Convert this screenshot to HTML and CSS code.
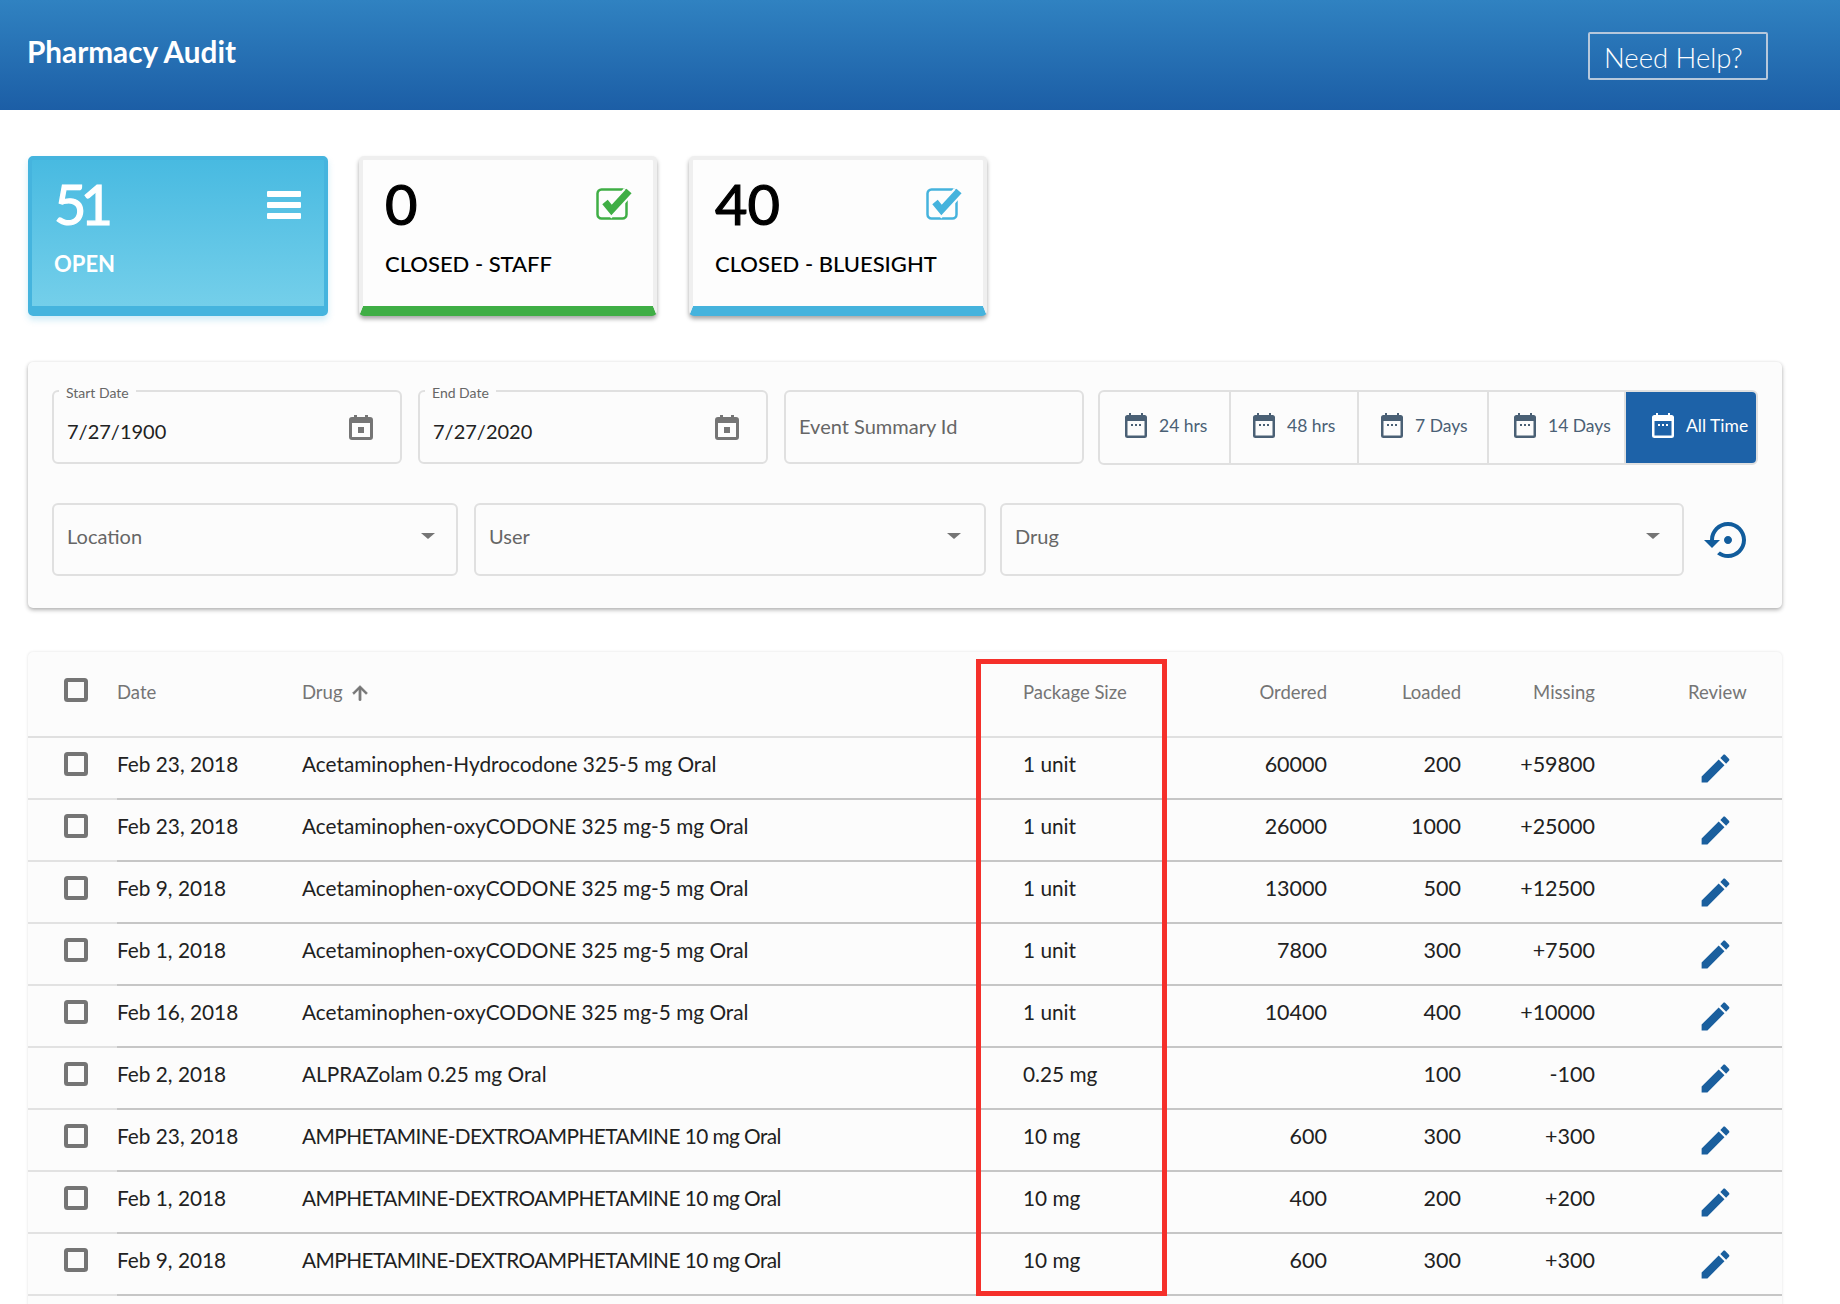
FILE: index.html
```html
<!DOCTYPE html>
<html lang="en">
<head>
<meta charset="utf-8">
<title>Pharmacy Audit</title>
<link rel="stylesheet" href="styles.css">
</head>
<body>
<svg class="defs" width="0" height="0" aria-hidden="true">
  <symbol id="cb" viewBox="0 0 24 24"><rect x="2" y="2" width="20" height="20" rx="1.5" fill="none" stroke="currentColor" stroke-width="4"/></symbol>
  <symbol id="pencil" viewBox="0 0 24 24"><path fill="currentColor" d="M3 17.25V21h3.75L17.81 9.94l-3.75-3.75L3 17.25zM20.71 7.04c.39-.39.39-1.02 0-1.41l-2.34-2.34c-.39-.39-1.02-.39-1.41 0l-1.83 1.83 3.75 3.75 1.83-1.83z"/></symbol>
  <symbol id="cal" viewBox="0 0 24 25"><path fill="currentColor" d="M5 0h3v2h8V0h3v2h2a3 3 0 0 1 3 3v17a3 3 0 0 1-3 3H3a3 3 0 0 1-3-3V5a3 3 0 0 1 3-3h2zM3 8v14h18V8zM9 12h6v6H9z"/></symbol>
  <symbol id="calq" viewBox="0 0 22 25"><path fill="currentColor" d="M4 0h2v2h10V0h2v2h1.500A2.500 2.500 0 0 1 22 4.500v18a2.500 2.500 0 0 1-2.500 2.500h-17A2.500 2.500 0 0 1 0 22.500v-18A2.500 2.500 0 0 1 2.500 2H4zM2.500 8v14.500h17V8zM6 11h2v2H6zM10 11h2v2h-2zM14 11h2v2h-2z"/></symbol>
  <symbol id="reset" viewBox="0 0 24 24"><path fill="currentColor" d="M14 12c0-1.100-.9-2-2-2s-2 .9-2 2 .9 2 2 2 2-.9 2-2zm-2-9c-4.970 0-9 4.030-9 9H0l4 4 4-4H5c0-3.870 3.130-7 7-7s7 3.130 7 7-3.130 7-7 7c-1.510 0-2.910-.49-4.060-1.300l-1.420 1.440C8.040 20.300 9.940 21 12 21c4.970 0 9-4.030 9-9s-4.030-9-9-9z"/></symbol>
  <symbol id="check" viewBox="0 0 38 32"><rect x="1.500" y="1.500" width="29" height="29" rx="4" fill="none" stroke="currentColor" stroke-width="2.500"/><path d="M9 14l6.500 8L32 4" fill="none" stroke="#fdfdfd" stroke-width="11"/><path d="M9 14l6.500 8L33 3" fill="none" stroke="currentColor" stroke-width="7"/></symbol>
</svg>

<header class="topbar">
  <h1 class="brand">Pharmacy Audit</h1>
  <button class="help">Need Help?</button>
</header>

<main class="page">
  <section class="cards">
    <div class="card card-open">
      <div class="card-top"><span class="count">51</span><span class="burger"><i></i><i></i><i></i></span></div>
      <div class="card-label">OPEN</div>
    </div>
    <div class="card card-staff">
      <div class="card-top"><span class="count">0</span><svg class="card-icon"><use href="#check"/></svg></div>
      <div class="card-label">CLOSED - STAFF</div>
    </div>
    <div class="card card-blue">
      <div class="card-top"><span class="count">40</span><svg class="card-icon"><use href="#check"/></svg></div>
      <div class="card-label">CLOSED - BLUESIGHT</div>
    </div>
  </section>

  <section class="filters">
    <div class="filter-row row-one">
      <div class="field w-start"><span class="legend">Start Date</span><span class="value">7/27/1900</span><svg class="ico-cal"><use href="#cal"/></svg></div>
      <div class="field w-end"><span class="legend">End Date</span><span class="value">7/27/2020</span><svg class="ico-cal"><use href="#cal"/></svg></div>
      <div class="field w-id"><span class="placeholder">Event Summary Id</span></div>
      <div class="ranges">
        <div class="range r1"><svg class="ico-q"><use href="#calq"/></svg>24 hrs</div>
        <div class="range r2"><svg class="ico-q"><use href="#calq"/></svg>48 hrs</div>
        <div class="range r3"><svg class="ico-q"><use href="#calq"/></svg>7 Days</div>
        <div class="range r4"><svg class="ico-q"><use href="#calq"/></svg>14 Days</div>
        <div class="range r5 active"><svg class="ico-q"><use href="#calq"/></svg>All Time</div>
      </div>
    </div>
    <div class="filter-row row-two">
      <div class="field select w-loc"><span class="placeholder">Location</span><i class="caret"></i></div>
      <div class="field select w-user"><span class="placeholder">User</span><i class="caret"></i></div>
      <div class="field select w-drug"><span class="placeholder">Drug</span><i class="caret"></i></div>
      <svg class="ico-reset"><use href="#reset"/></svg>
    </div>
  </section>

  <section class="table">
    <div class="tr th">
      <div class="td c-check"><svg class="ico-cb"><use href="#cb"/></svg></div>
      <div class="td">Date</div>
      <div class="td">Drug<svg class="ico-sort" viewBox="0 0 24 24"><path fill="currentColor" stroke="currentColor" stroke-width="1" d="M4 12l1.410 1.410L11 7.830V20h2V7.830l5.580 5.590L20 12l-8-8-8 8z"/></svg></div>
      <div class="td">Package Size</div>
      <div class="td num">Ordered</div>
      <div class="td num">Loaded</div>
      <div class="td num">Missing</div>
      <div class="td c-review">Review</div>
    </div>
    <div class="tr"><div class="td c-check"><svg class="ico-cb"><use href="#cb"/></svg></div><div class="td">Feb 23, 2018</div><div class="td">Acetaminophen-Hydrocodone 325-5 mg Oral</div><div class="td">1 unit</div><div class="td num">60000</div><div class="td num">200</div><div class="td num">+59800</div><div class="td c-review"><svg class="ico-edit"><use href="#pencil"/></svg></div></div>
    <div class="tr"><div class="td c-check"><svg class="ico-cb"><use href="#cb"/></svg></div><div class="td">Feb 23, 2018</div><div class="td">Acetaminophen-oxyCODONE 325 mg-5 mg Oral</div><div class="td">1 unit</div><div class="td num">26000</div><div class="td num">1000</div><div class="td num">+25000</div><div class="td c-review"><svg class="ico-edit"><use href="#pencil"/></svg></div></div>
    <div class="tr"><div class="td c-check"><svg class="ico-cb"><use href="#cb"/></svg></div><div class="td">Feb 9, 2018</div><div class="td">Acetaminophen-oxyCODONE 325 mg-5 mg Oral</div><div class="td">1 unit</div><div class="td num">13000</div><div class="td num">500</div><div class="td num">+12500</div><div class="td c-review"><svg class="ico-edit"><use href="#pencil"/></svg></div></div>
    <div class="tr"><div class="td c-check"><svg class="ico-cb"><use href="#cb"/></svg></div><div class="td">Feb 1, 2018</div><div class="td">Acetaminophen-oxyCODONE 325 mg-5 mg Oral</div><div class="td">1 unit</div><div class="td num">7800</div><div class="td num">300</div><div class="td num">+7500</div><div class="td c-review"><svg class="ico-edit"><use href="#pencil"/></svg></div></div>
    <div class="tr"><div class="td c-check"><svg class="ico-cb"><use href="#cb"/></svg></div><div class="td">Feb 16, 2018</div><div class="td">Acetaminophen-oxyCODONE 325 mg-5 mg Oral</div><div class="td">1 unit</div><div class="td num">10400</div><div class="td num">400</div><div class="td num">+10000</div><div class="td c-review"><svg class="ico-edit"><use href="#pencil"/></svg></div></div>
    <div class="tr"><div class="td c-check"><svg class="ico-cb"><use href="#cb"/></svg></div><div class="td">Feb 2, 2018</div><div class="td">ALPRAZolam 0.25 mg Oral</div><div class="td">0.25 mg</div><div class="td num"></div><div class="td num">100</div><div class="td num">-100</div><div class="td c-review"><svg class="ico-edit"><use href="#pencil"/></svg></div></div>
    <div class="tr"><div class="td c-check"><svg class="ico-cb"><use href="#cb"/></svg></div><div class="td">Feb 23, 2018</div><div class="td caps">AMPHETAMINE-DEXTROAMPHETAMINE 10 mg Oral</div><div class="td">10 mg</div><div class="td num">600</div><div class="td num">300</div><div class="td num">+300</div><div class="td c-review"><svg class="ico-edit"><use href="#pencil"/></svg></div></div>
    <div class="tr"><div class="td c-check"><svg class="ico-cb"><use href="#cb"/></svg></div><div class="td">Feb 1, 2018</div><div class="td caps">AMPHETAMINE-DEXTROAMPHETAMINE 10 mg Oral</div><div class="td">10 mg</div><div class="td num">400</div><div class="td num">200</div><div class="td num">+200</div><div class="td c-review"><svg class="ico-edit"><use href="#pencil"/></svg></div></div>
    <div class="tr"><div class="td c-check"><svg class="ico-cb"><use href="#cb"/></svg></div><div class="td">Feb 9, 2018</div><div class="td caps">AMPHETAMINE-DEXTROAMPHETAMINE 10 mg Oral</div><div class="td">10 mg</div><div class="td num">600</div><div class="td num">300</div><div class="td num">+300</div><div class="td c-review"><svg class="ico-edit"><use href="#pencil"/></svg></div></div>
    <div class="highlight"></div>
  </section>
</main>
</body>
</html>
```
FILE: styles.css
```css
* { box-sizing: border-box; }
html, body { height: 100%; overflow: hidden; }
body { margin: 0; background: #fff; font-family: "Lato", "Liberation Sans", sans-serif; color: #212121; }
.defs { position: absolute; }

.topbar { height: 110px; background: linear-gradient(#3082c1, #1c5ea6); display: flex; justify-content: space-between; padding: 32px 72px 0 27px; }
.brand { margin: 0; font-size: 29.700px; font-weight: 700; color: #fff; line-height: 40px; }
.help { width: 180px; height: 48px; background: transparent; border: 2px solid #b6c8dc; border-radius: 2px; color: #fff; font: 300 27.500px "Lato", sans-serif; text-align: left; padding: 2px 0 0 14px; }

.page { padding: 46px 58px 0 28px; }

.cards { display: flex; gap: 31px; }
.card { width: 298px; height: 160px; border: 4px solid #efefef; border-bottom-width: 10px; border-radius: 5px; background: #fdfdfd; padding: 13px 22px 0 22px; box-shadow: 0 3px 4px rgba(0,0,0,.35); }
.card-open { width: 300px; border-color: #45b4de; background: linear-gradient(#48bae1, #74cfea); color: #fff; box-shadow: 0 4px 6px rgba(69,180,222,.25); }
.card-staff { border-bottom-color: #3fae45; color: #000; }
.card-blue { border-bottom-color: #45b3dd; color: #000; margin-left: 1px; }
.card-top { display: flex; justify-content: space-between; align-items: center; height: 62px; }
.count { font-size: 56px; line-height: 62px; font-weight: 400; -webkit-text-stroke: 1.2px currentColor; }
.card-open .count { letter-spacing: -6px; }
.card-label { margin-top: 14px; font-size: 22px; line-height: 30px; font-weight: 500; }
.card-open .card-label { font-weight: 700; }
.burger { display: flex; flex-direction: column; gap: 5px; margin: 2px 1px 0 0; }
.burger i { display: block; width: 34px; height: 6px; background: #fff; border-radius: 1px; }
.card-icon { width: 38px; height: 32px; margin-right: -3px; }
.card-staff .card-icon { color: #3fae45; }
.card-blue .card-icon { color: #45b3dd; }

.filters { margin-top: 46px; height: 246px; background: #fcfcfc; border-radius: 5px; padding: 28px 0 0 24px; box-shadow: 0 2px 4px rgba(0,0,0,.3), 0 0 3px rgba(0,0,0,.06); }
.filter-row { display: flex; }
.row-one { height: 74px; }
.row-two { height: 73px; margin-top: 39px; }
.field { position: relative; flex: none; height: 100%; border: 2px solid #e0e0e0; border-radius: 6px; display: flex; align-items: center; justify-content: space-between; padding: 0 27px 0 13px; font-size: 20px; }
.select { padding: 0 21px 8px 13px; }
.w-start { width: 350px; }
.w-end { width: 350px; margin-left: 16px; }
.w-id { width: 300px; margin-left: 16px; padding-bottom: 2px; }
.w-loc { width: 406px; }
.w-user { width: 512px; margin-left: 16px; padding-right: 23px; }
.w-drug { width: 684px; margin-left: 14px; padding-right: 22px; }
.legend { position: absolute; left: 5px; top: -6px; padding: 0 7px; background: #fcfcfc; font-size: 14px; line-height: 14px; color: #666; }
.value { color: #222; padding-top: 8px; }
.placeholder { color: #666; }
.ico-cal { width: 24px; height: 25px; color: #757575; }
.caret { width: 0; height: 0; border: 7.500px solid transparent; border-top: 6px solid #757575; border-bottom: 0; }
.ico-reset { width: 48px; height: 48px; margin-left: 20px; margin-top: 13px; color: #115c9c; }

.ranges { display: flex; flex: none; width: 660px; height: 75px; margin-left: 14px; border: 2px solid #e0e0e0; border-radius: 6px; overflow: hidden; font-size: 17.500px; color: #4a6075; }
.range { display: flex; flex: none; align-items: center; gap: 12px; padding: 0 0 4px 25px; border-right: 2px solid #e0e0e0; }
.r1 { width: 131px; }
.r2 { width: 128px; padding-left: 22px; }
.r3 { width: 130px; padding-left: 22px; }
.r4 { width: 137px; padding-left: 25px; }
.r5 { flex: 1; padding-left: 26px; }
.range.active { background: #1d62a8; color: #fff; border: 0; }
.ico-q { width: 22px; height: 25px; flex: none; }

.table { position: relative; margin-top: 44px; background: #fcfcfc; border-radius: 5px 5px 0 0; padding-bottom: 40px; box-shadow: 0 0 3px rgba(0,0,0,.12); }
.tr { display: grid; grid-template-columns: 89px 185px 721px 144px 160px 134px 134px 1fr; height: 62px; font-size: 20.800px; }
.tr.th { height: 86px; font-size: 18.500px; color: #757575; }
.td { display: flex; align-items: center; padding-bottom: 9px; border-bottom: 2px solid #c6c6c6; white-space: nowrap; }
.th .td { border-bottom-color: #e0e0e0; padding-bottom: 4px; }
.caps { letter-spacing: -.55px; }
.c-check { border-bottom-color: #e2e2e2; padding: 0 0 8px 36px; color: #757575; }
.th .c-check { padding: 0 0 8px 36px; }
.num { justify-content: flex-end; }
.tr:not(.th) .num { font-size: 21.500px; padding-bottom: 9px; }
.c-review { padding: 0 0 0 93px; }
.th .c-review { padding: 0 0 4px 93px; }
.ico-cb { width: 24px; height: 24px; }
.ico-edit { width: 37px; height: 37px; margin-left: 9px; color: #1a5f9e; }
.ico-sort { width: 22px; height: 22px; margin-left: 6px; margin-top: 2px; color: #757575; }
.highlight { position: absolute; left: 948px; top: 7px; width: 191px; height: 637px; border: 5px solid #f5302a; }
```
